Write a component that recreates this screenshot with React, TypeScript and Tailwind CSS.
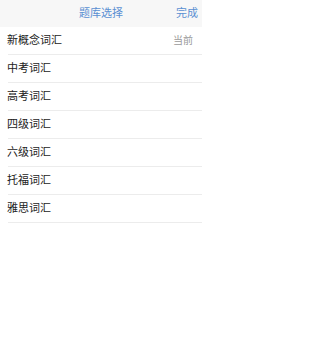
import React from "react";

const items = ["新概念词汇", "中考词汇", "高考词汇", "四级词汇", "六级词汇", "托福词汇", "雅思词汇"];

export default function App() {
  return (
    <div
      className="w-[202px] h-[359px] bg-white overflow-hidden"
      style={{ fontFamily: '"Liberation Sans", "Noto Sans CJK SC", sans-serif' }}
    >
      <div className="h-[27px] bg-[#f7f7f7] relative flex items-center justify-center">
        <span className="text-[11px] text-[#5a8fd2] leading-none">题库选择</span>
        <span className="absolute right-[4px] top-0 h-full flex items-center text-[11px] text-[#5a8fd2] leading-none">完成</span>
      </div>
      <div className="pl-[8px]">
        {items.map((t, i) => (
          <div key={t} className="h-[28px] flex items-center border-b border-[#ececec] pr-[9px]">
            <span className="text-[11px] text-[#222] leading-none -ml-[1px]">{t}</span>
            {i === 0 && <span className="ml-auto text-[10px] text-[#9a9a9a] leading-none">当前</span>}
          </div>
        ))}
      </div>
    </div>
  );
}
